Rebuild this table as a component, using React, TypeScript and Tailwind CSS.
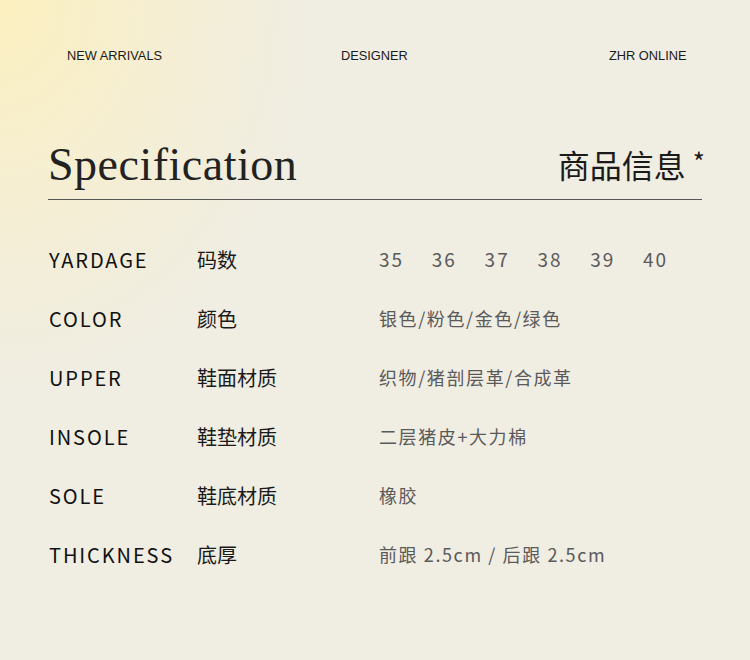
const rows = [
  { en: "YARDAGE", zh: "码数", value: null },
  { en: "COLOR", zh: "颜色", value: "银色/粉色/金色/绿色" },
  { en: "UPPER", zh: "鞋面材质", value: "织物/猪剖层革/合成革" },
  { en: "INSOLE", zh: "鞋垫材质", value: "二层猪皮+大力棉" },
  { en: "SOLE", zh: "鞋底材质", value: "橡胶" },
  { en: "THICKNESS", zh: "底厚", value: "前跟 2.5cm / 后跟 2.5cm" },
];

const sizes = ["35", "36", "37", "38", "39", "40"];

export default function App() {
  return (
    <div
      className="w-[750px] h-[660px] overflow-hidden bg-[#f0ede2] bg-[radial-gradient(ellipse_420px_520px_at_0px_0px,#fcf0bf_0%,#f4eed6_45%,#f0ede2_75%)]"
      style={{ fontFamily: '"Noto Sans CJK SC", "Noto Sans", sans-serif' }}
    >
      <header className="flex items-center pt-[46px] pl-[67px] text-[12.8px] text-[#1a1a1a] font-['Liberation_Sans',sans-serif]">
        <span className="w-[274px]">NEW ARRIVALS</span>
        <span className="w-[268px]">DESIGNER</span>
        <span>ZHR ONLINE</span>
      </header>

      <section className="mx-[48px] mt-[72px] flex items-end justify-between border-b border-[#555] pb-[6px]">
        <h1 className="text-[46px] leading-[56px] text-[#222] font-['Liberation_Serif',serif] tracking-[0.5px]">Specification</h1>
        <div className="text-[32px] leading-[40px] text-[#1a1a1a] mb-[6px] mr-[-3px]">
          商品信息 <span className="relative top-[-6px] text-[26px]">*</span>
        </div>
      </section>

      <div className="mt-[30px] ml-[49px] flex flex-col">
        {rows.map((row) => (
          <div key={row.en} className="flex items-center h-[59px]">
            <div className="w-[148px] text-[20px] tracking-[1.9px] text-[#111]">{row.en}</div>
            <div className="w-[182px] text-[20px] text-[#1a1a1a]">{row.zh}</div>
            {row.value ? (
              <div className="text-[18px] tracking-[1.6px] text-[#5a5a5a]">{row.value}</div>
            ) : (
              <div className="flex text-[19px] tracking-[2px] text-[#5a5a5a]">
                {sizes.map((s) => (
                  <span key={s} className="w-[52.8px]">{s}</span>
                ))}
              </div>
            )}
          </div>
        ))}
      </div>
    </div>
  );
}
